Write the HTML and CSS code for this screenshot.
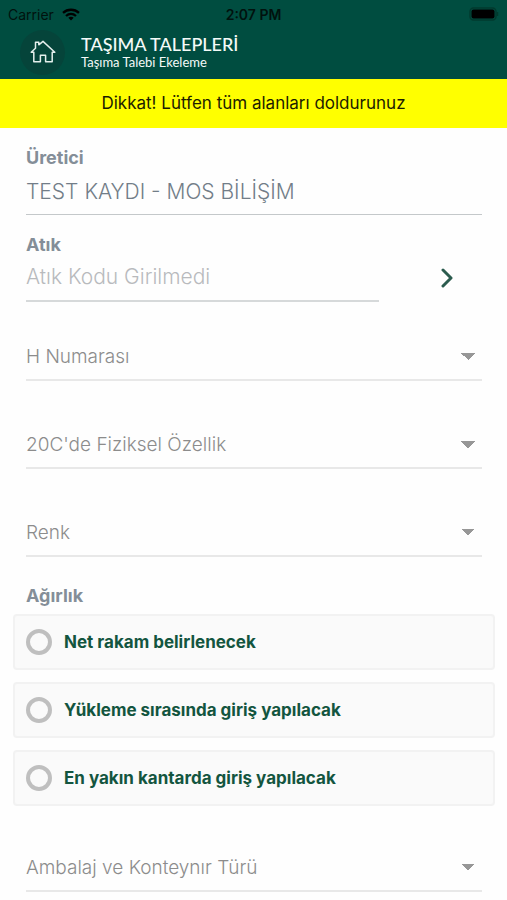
FILE: index.html
```html
<!DOCTYPE html>
<html lang="tr">
<head>
<meta charset="utf-8">
<meta name="viewport" content="width=device-width, initial-scale=1">
<title>Taşıma Talepleri</title>
<link rel="stylesheet" href="styles.css">
</head>
<body>
<header class="top">
  <div class="status">
    <div class="carrier">
      <span>Carrier</span>
      <svg class="wifi" viewBox="0 0 18 13" aria-hidden="true"><g fill="none" stroke="currentColor" stroke-width="2.3"><path d="M1 4.8C5.5.7 12.5.7 17 4.8"/><path d="M4 8C7 5.3 11 5.3 14 8"/></g><path d="M9 12.5 6.3 9.8C7.8 8.5 10.2 8.5 11.7 9.8Z" fill="currentColor"/></svg>
    </div>
    <span class="clock">2:07 PM</span>
    <svg class="battery" viewBox="0 0 30 14" aria-hidden="true"><rect x="1" y="1" width="26" height="12" rx="3.5" fill="none" stroke="#003a2e" stroke-width="1.5"/><rect x="2.5" y="2.5" width="23" height="9" rx="2" fill="#000"/><path d="M28.5 5v4" stroke="#003a2e" stroke-width="1.5"/></svg>
  </div>
  <div class="bar">
    <a class="home" href="#" aria-label="Ana sayfa">
      <svg viewBox="0 0 26 24" aria-hidden="true"><path d="M3.8 12.2H1.2L5.5 8.2V2.2h3.3v2.6L13 1.4l11.8 10.8h-2.6v9.6h-6.6v-6.6h-5.2v6.6H3.8Z" fill="none" stroke="currentColor" stroke-width="1.5" stroke-linejoin="round"/></svg>
    </a>
    <div class="titles">
      <h1>TAŞIMA TALEPLERİ</h1>
      <p>Taşıma Talebi Ekeleme</p>
    </div>
  </div>
</header>
<p class="warning" role="alert">Dikkat! Lütfen tüm alanları doldurunuz</p>
<form class="form">
  <div class="field">
    <label for="producer">Üretici</label>
    <input class="text" id="producer" type="text" value="TEST KAYDI - MOS BİLİŞİM">
  </div>
  <div class="field lookup">
    <div class="entry">
      <label for="waste">Atık</label>
      <input class="text" id="waste" type="text" placeholder="Atık Kodu Girilmedi">
    </div>
    <button class="next" type="button" aria-label="Atık kodu seç">
      <svg viewBox="0 0 12 20" aria-hidden="true"><path d="m2 2 8 8-8 8" fill="none" stroke="currentColor" stroke-width="3" stroke-linecap="round" stroke-linejoin="round"/></svg>
    </button>
  </div>
  <div class="selects">
    <select aria-label="H Numarası"><option>H Numarası</option></select>
    <select aria-label="20C'de Fiziksel Özellik"><option>20C'de Fiziksel Özellik</option></select>
    <select aria-label="Renk"><option>Renk</option></select>
  </div>
  <fieldset class="weight">
    <legend>Ağırlık</legend>
    <div class="options">
      <label class="option"><input type="radio" name="weight"><span>Net rakam belirlenecek</span></label>
      <label class="option"><input type="radio" name="weight"><span>Yükleme sırasında giriş yapılacak</span></label>
      <label class="option"><input type="radio" name="weight"><span>En yakın kantarda giriş yapılacak</span></label>
    </div>
  </fieldset>
  <div class="selects last">
    <select aria-label="Ambalaj ve Konteynır Türü"><option>Ambalaj ve Konteynır Türü</option></select>
  </div>
</form>
</body>
</html>
```
FILE: styles.css
```css
* { box-sizing: border-box; }
body { margin: 0; background: #fefefe; font-family: Inter, "Liberation Sans", sans-serif; }
h1, p { margin: 0; }

.top { background: #004d40; padding-bottom: 3px; }
.status { display: grid; grid-template-columns: 1fr auto 1fr; align-items: center; height: 28px; padding: 0 8px; font-size: 14px; color: #00120e; }
.carrier { display: flex; align-items: center; gap: 8px; }
.wifi { width: 18px; height: 13px; color: #000; }
.clock { font-weight: 600; }
.battery { justify-self: end; width: 30px; height: 14px; }
.bar { display: flex; align-items: center; gap: 16px; height: 48px; padding-left: 20px; }
.home { display: flex; align-items: center; justify-content: center; width: 45px; height: 45px; border-radius: 50%; background: #05443a; color: #e4efec; }
.home svg { width: 26px; height: 24px; }
.titles { color: #f4faf8; font-family: Lato, "Liberation Sans", sans-serif; }
.titles h1 { font-size: 18px; line-height: 20px; font-weight: 500; }
.titles p { font-size: 13px; line-height: 16px; }

.warning { padding: 12px 16px; background: #ffff00; color: #1c1c00; font-size: 17px; line-height: 25px; text-align: center; }

.form { padding: 18px 12px 18px 13px; }
.field { margin: 0 13px 18px; }
.field label, legend { display: block; font-size: 18px; line-height: 24px; font-weight: 700; color: #848e98; }
.text { display: block; width: 100%; height: 45px; padding: 0 0 2px; border: 0; border-bottom: 1px solid #c4c8ca; border-radius: 0; background: none; font: inherit; font-size: 21px; font-weight: 300; color: #727d88; outline: 0; }
.text::placeholder { color: #b8babd; opacity: 1; }
.lookup { display: flex; align-items: flex-end; margin-bottom: 31px; }
.entry { flex: 1; }
.entry .text { padding-bottom: 4px; border-bottom: 2px solid #d6d9da; }
.next { display: flex; align-items: center; justify-content: center; width: 103px; height: 48px; padding: 0 0 0 33px; border: 0; background: none; color: #2b5b4e; }
.next svg { width: 12px; height: 20px; }

.selects { display: grid; gap: 40px; margin: 0 13px; }
select { appearance: none; width: 100%; height: 48px; padding: 0 32px 0 0; border: 0; border-bottom: 2px solid #e8e8e8; border-radius: 0; background: conic-gradient(from 315deg at 50% 100%, #979797 90deg, transparent 0) right 7px center / 14px 7px no-repeat; font: inherit; font-size: 19px; font-weight: 300; color: #8c8c8c; }

.weight { margin: 27px 0 0; padding: 0; border: 0; min-width: 0; }
legend { padding: 0 13px; }
.options { display: grid; gap: 12px; padding-top: 6px; }
.option { display: flex; align-items: center; gap: 12px; height: 56px; padding: 0 11px; border: 2px solid #f2f2f2; border-radius: 4px; background: #fafafa; color: #13553f; font-size: 17px; font-weight: 700; }
.option input { appearance: none; width: 26px; height: 26px; margin: 0; border: 4px solid #bfbfbf; border-radius: 50%; background: #fafafa; }
.last { margin-top: 38px; }
```
